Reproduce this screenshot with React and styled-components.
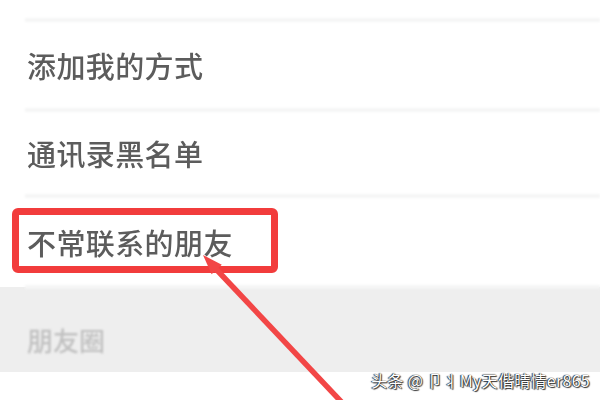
import React from 'react';
import styled, { createGlobalStyle } from 'styled-components';

const GlobalStyle = createGlobalStyle`
  html, body {
    margin: 0;
    padding: 0;
    background: #fff;
  }
  body {
    font-family: "Noto Sans CJK SC", "Noto Sans", sans-serif;
  }
`;

const Page = styled.div`
  position: relative;
  width: 600px;
  height: 400px;
  overflow: hidden;
  background: #fff;
  display: flex;
  flex-direction: column;
`;

const Row = styled.div`
  position: relative;
  height: ${p => p.h}px;
  flex: none;
  display: flex;
  align-items: center;
  padding-left: 27px;
  box-sizing: border-box;
  &::after {
    content: '';
    position: absolute;
    left: 25px;
    right: 0;
    bottom: -2px;
    height: 4px;
    background: #f5f6f6;
    filter: blur(1px);
  }
`;

const Label = styled.span`
  font-size: 29px;
  font-weight: 500;
  color: #5c5c5c;
  letter-spacing: 0.4px;
  filter: blur(0.7px);
`;

const Section = styled.div`
  height: 85px;
  flex: none;
  background: #eeeeee;
  display: flex;
  align-items: flex-end;
  padding: 0 0 14px 27px;
  box-sizing: border-box;
`;

const SectionTitle = styled.span`
  font-size: 26px;
  font-weight: 500;
  color: #c0c0c0;
  filter: blur(0.8px);
`;

const Highlight = styled.div`
  position: absolute;
  left: 12px;
  top: 12px;
  width: 266px;
  height: 65px;
  box-sizing: border-box;
  border: 7px solid #f23c3c;
  border-radius: 6px;
  filter: blur(0.4px);
`;

const Arrow = styled.svg`
  position: absolute;
  left: 0;
  top: 0;
  pointer-events: none;
  filter: blur(0.5px);
`;

const Watermark = styled.div`
  position: absolute;
  right: 10px;
  bottom: 8px;
  font-family: "Noto Sans CJK SC", sans-serif;
  font-size: 16px;
  color: #fff;
  letter-spacing: 0.3px;
  text-shadow: 0 0 1px #000, 1px 1px 1px #333, -1px 0 1px #333;
`;

const App = () => (
  <Page>
    <GlobalStyle />
    <Row h={20} />
    <Row h={90}><Label>添加我的方式</Label></Row>
    <Row h={86}><Label>通讯录黑名单</Label></Row>
    <Row h={91}>
      <Label>不常联系的朋友</Label>
      <Highlight />
    </Row>
    <Section><SectionTitle>朋友圈</SectionTitle></Section>
    <Arrow width="600" height="400" viewBox="0 0 600 400">
      <line x1="215" y1="268" x2="350" y2="411" stroke="#f24646" strokeWidth="5.5" />
      <polygon points="203,255 211.6,274.3 221.8,264.7" fill="#f24646" />
    </Arrow>
    <Watermark>头条 @ 卩丬My天偕晴情er865</Watermark>
  </Page>
);

export default App;
